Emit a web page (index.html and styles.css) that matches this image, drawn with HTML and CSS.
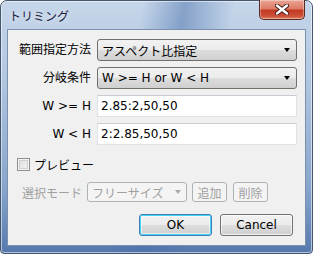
FILE: index.html
```html
<!DOCTYPE html>
<html lang="ja">
<head>
  <meta charset="UTF-8">
  <title>トリミング</title>
  <link rel="stylesheet" href="styles.css">
</head>
<body>
  <div class="window">
    <div class="titlebar">
      <span class="title">トリミング</span>
      <div class="close">
        <svg width="14" height="11" viewBox="0 0 14 11">
          <path d="M2 1.5 L12 9.5 M12 1.5 L2 9.5" stroke="#3b1a16" stroke-width="4.2" stroke-linecap="round"/>
          <path d="M2 1.5 L12 9.5 M12 1.5 L2 9.5" stroke="#ffffff" stroke-width="2.4" stroke-linecap="round"/>
        </svg>
      </div>
    </div>

    <div class="client">
      <div class="form">
        <label>範囲指定方法</label>
        <div class="combo"><span>アスペクト比指定</span><i class="arrow"></i></div>

        <label>分岐条件</label>
        <div class="combo"><span>W &gt;= H or W &lt; H</span><i class="arrow"></i></div>

        <label>W &gt;= H</label>
        <div class="field">2.85:2,50,50</div>

        <label>W &lt; H</label>
        <div class="field">2:2.85,50,50</div>
      </div>

      <div class="preview">
        <span class="check"></span>
        <span>プレビュー</span>
      </div>

      <div class="mode">
        <label>選択モード</label>
        <div class="combo disabled"><span>フリーサイズ</span><i class="arrow"></i></div>
        <button class="btn small" disabled>追加</button>
        <button class="btn small" disabled>削除</button>
      </div>

      <div class="actions">
        <button class="btn default">OK</button>
        <button class="btn">Cancel</button>
      </div>
    </div>
  </div>
</body>
</html>
```

FILE: styles.css
```css
body { margin: 0; font-family: "DejaVu Sans", "Noto Sans CJK JP", sans-serif; font-size: 12px; color: #000; }

.window {
  width: 313px; height: 254px; box-sizing: border-box;
  border: 1px solid #44566e; border-radius: 7px 7px 4px 4px;
  padding: 0 6px 7px;
  display: flex; flex-direction: column;
  background:
    linear-gradient(100deg, rgba(255,255,255,0) 40%, rgba(70,110,170,0.5) 52%, rgba(70,110,170,0.35) 56%, rgba(255,255,255,0) 66%),
    linear-gradient(to bottom, #c6d6ea 0, #b2c7e1 30%, #86a4cb 75%, #5679ad 100%);
  box-shadow: inset 0 0 0 1px rgba(255,255,255,0.55);
}

.titlebar { height: 28px; display: flex; align-items: flex-start; }
.title { padding: 6px 0 0 2px; color: #1c1c3a; font-size: 12px; text-shadow: 0 0 6px rgba(255,255,255,0.9); }
.close {
  margin-left: auto; margin-right: 1px; margin-top: -1px;
  width: 46px; height: 20px; box-sizing: border-box;
  border: 1px solid #5a2a22; border-top: none; border-radius: 0 0 5px 5px;
  background: linear-gradient(to bottom, #eba596 0, #dc7c66 45%, #c23a24 55%, #cd5038 85%, #e0846a 100%);
  box-shadow: inset 0 0 0 1px rgba(255,255,255,0.35);
  display: flex; align-items: center; justify-content: center;
}

.client {
  flex: 1; background: #f0f0f0;
  border: 1px solid #7b90ad;
  padding: 9px 9px 0 9px;
}

.form { display: grid; grid-template-columns: 74px 200px; grid-auto-rows: 22px; column-gap: 6px; row-gap: 6px; }
.form label { text-align: right; line-height: 22px; white-space: nowrap; }

.combo {
  box-sizing: border-box; display: flex; align-items: center; justify-content: space-between;
  padding: 0 6px 0 4px;
  border: 1px solid #707070; border-radius: 3px;
  background: linear-gradient(to bottom, #f2f2f2 0, #ebebeb 50%, #dddddd 51%, #cfcfcf 100%);
  white-space: nowrap;
}
.arrow { width: 0; height: 0; border-left: 3.5px solid transparent; border-right: 3.5px solid transparent; border-top: 4px solid #000; }

.field {
  box-sizing: border-box; padding: 0 3px; line-height: 20px;
  background: #fff; border: 1px solid #dfe3e8; border-top-color: #c8ccd2;
}

.preview { display: flex; align-items: center; gap: 4px; margin-top: 13px; height: 13px; }
.check {
  width: 13px; height: 13px; box-sizing: border-box;
  border: 1px solid #8e8f8f;
  background: linear-gradient(135deg, #dcdcdc 0, #f6f6f6 100%);
  box-shadow: inset 0 0 0 1px #f4f4f4, inset 0 0 0 2px #cfcfcf;
}

.mode { display: flex; align-items: center; gap: 5px; margin-top: 11px; height: 20px; }
.mode label { width: 65px; text-align: right; color: #a0a0a0; white-space: nowrap; }
.mode .combo { width: 100px; height: 20px; }

.combo.disabled { border-color: #adb2b5; background: #f4f4f4; color: #a0a0a0; padding-right: 5px; }
.combo.disabled .arrow { border-top-color: #a8a8a8; }

.btn {
  font-family: inherit; font-size: 12px; box-sizing: border-box; padding: 0;
  border: 1px solid #707070; border-radius: 3px;
  background: linear-gradient(to bottom, #f2f2f2 0, #ebebeb 50%, #dddddd 51%, #cfcfcf 100%);
  box-shadow: inset 0 0 0 1px rgba(255,255,255,0.7);
  color: #000;
}
.btn.small { width: 35px; height: 20px; }
.btn.small + .btn.small { margin-left: 1px; }
.btn:disabled { border-color: #adb2b5; background: #f4f4f4; color: #a0a0a0; box-shadow: none; }

.actions { display: flex; justify-content: flex-end; gap: 8px; margin-top: 12px; margin-right: 3px; }
.actions .btn { width: 73px; height: 22px; }
.btn.default { border-color: #3c7fb1; box-shadow: inset 0 0 0 1px #48d1fa, inset 0 0 0 2px rgba(255,255,255,0.5); }
```
